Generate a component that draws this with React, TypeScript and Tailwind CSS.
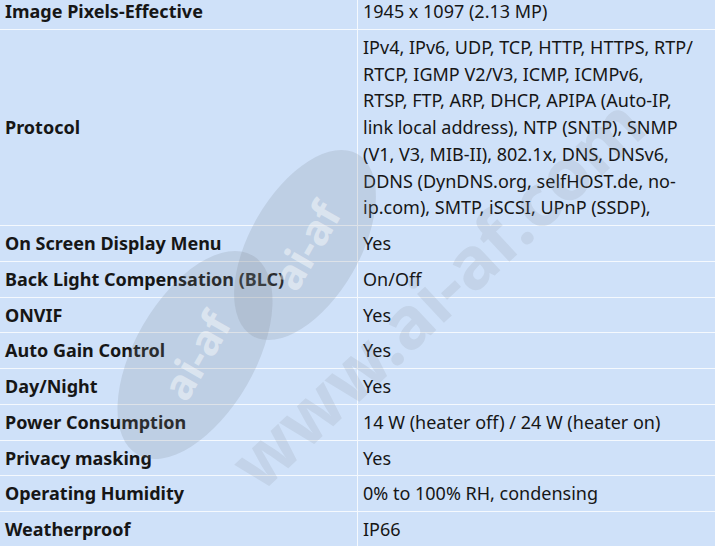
const protocolLines = [
  "IPv4, IPv6, UDP, TCP, HTTP, HTTPS, RTP/",
  "RTCP, IGMP V2/V3, ICMP, ICMPv6,",
  "RTSP, FTP, ARP, DHCP, APIPA (Auto-IP,",
  "link local address), NTP (SNTP), SNMP",
  "(V1, V3, MIB-II), 802.1x, DNS, DNSv6,",
  "DDNS (DynDNS.org, selfHOST.de, no-",
  "ip.com), SMTP, iSCSI, UPnP (SSDP),",
];

const rows: [string, React.ReactNode][] = [
  ["Image Pixels-Effective", "1945 x 1097 (2.13 MP)"],
  [
    "Protocol",
    protocolLines.map((line) => (
      <div key={line} className="whitespace-nowrap">
        {line}
      </div>
    )),
  ],
  ["On Screen Display Menu", "Yes"],
  ["Back Light Compensation (BLC)", "On/Off"],
  ["ONVIF", "Yes"],
  ["Auto Gain Control", "Yes"],
  ["Day/Night", "Yes"],
  ["Power Consumption", "14 W (heater off) / 24 W (heater on)"],
  ["Privacy masking", "Yes"],
  ["Operating Humidity", "0% to 100% RH, condensing"],
  ["Weatherproof", "IP66"],
];

// faint site watermark laid over the table
const Watermark = () => (
  <div className="pointer-events-none absolute inset-0 overflow-hidden">
    <div className="absolute left-[195px] top-[355px] flex h-[120px] w-[230px] -translate-x-1/2 -translate-y-1/2 -rotate-[60deg] items-center justify-center rounded-[50%] bg-[#7d8590]/20">
      <span className="text-[42px] font-bold text-white/45">ai-af</span>
    </div>
    <div className="absolute left-[305px] top-[245px] flex h-[110px] w-[210px] -translate-x-1/2 -translate-y-1/2 -rotate-[60deg] items-center justify-center rounded-[50%] bg-[#7d8590]/20">
      <span className="text-[42px] font-bold text-white/45">ai-af</span>
    </div>
    <div className="absolute left-[436px] top-[292px] -translate-x-1/2 -translate-y-1/2 -rotate-[43deg] whitespace-nowrap text-[72px] font-bold text-[#7d8590]/15">
      www.ai-af.com
    </div>
  </div>
);

export default function App() {
  return (
    <div
      className="relative h-[546px] w-[715px] overflow-hidden bg-[#cfe1f9] text-[18px] text-[#161616]"
      style={{ fontFamily: '"Noto Sans", "Open Sans", sans-serif' }}
    >
      <div className="-mt-[6px] grid grid-cols-[358px_1fr]">
        {rows.map(([label, value]) => (
          <div key={label} className="contents">
            <div className="flex items-center border-b border-r border-white/80 px-[5px] py-[4px] font-bold leading-[26.75px]">
              {label}
            </div>
            <div className="border-b border-white/80 py-[4px] pl-[5px] pr-[4px] leading-[26.75px]">
              {value}
            </div>
          </div>
        ))}
      </div>
      <Watermark />
    </div>
  );
}
